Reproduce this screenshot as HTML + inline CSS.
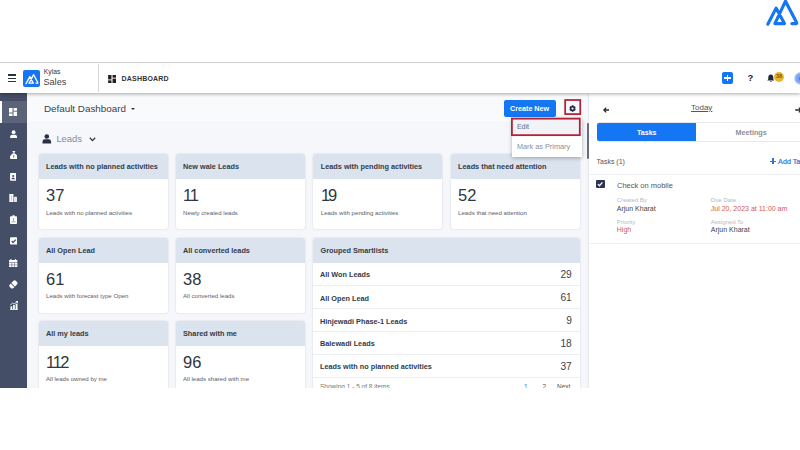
<!DOCTYPE html>
<html>
<head>
<meta charset="utf-8">
<title>Kylas Sales Dashboard</title>
<style>
*{box-sizing:border-box;margin:0;padding:0}
html,body{width:800px;height:450px;overflow:hidden;background:#fff;font-family:"Liberation Sans",sans-serif;color:#3a4250}
.abs{position:absolute}
#stage{position:relative;width:800px;height:450px;overflow:hidden;background:#fff}
#app{position:absolute;left:0;top:62px;width:800px;height:326px;overflow:hidden;background:#f6f7fb;border-top:1px solid #cdcdcd}
#hdr{position:absolute;left:0;top:0;width:800px;height:30.2px;background:#fff;box-shadow:0 1px 3.5px rgba(0,0,0,.34);z-index:5}
#side{position:absolute;left:0;top:30px;width:27.3px;height:296px;background:#454e67}
#side .act{position:absolute;left:0;top:7.7px;width:27.3px;height:22px;background:#5b637a}
#side .act:before{content:"";position:absolute;left:0;top:0;width:1.6px;height:22px;background:#fff}
#side svg{position:absolute}
.t{position:absolute;white-space:nowrap;line-height:1}
.card{position:absolute;background:#fff;border-radius:3px;box-shadow:0 0 2px rgba(120,135,160,.35);overflow:hidden}
.card .h{position:absolute;left:0;top:0;right:0;height:25.2px;background:#dae3ee}
.card .ti{position:absolute;left:7.5px;top:9.1px;font-size:7.3px;font-weight:bold;color:#333b48;white-space:nowrap;line-height:1}
.card .n{position:absolute;left:7.8px;top:34.5px;font-size:16px;transform:scaleX(1.03);transform-origin:0 0;color:#2f3642;white-space:nowrap;line-height:1}
.card .s{position:absolute;left:7.5px;top:55.8px;font-size:6.1px;color:#59606c;white-space:nowrap;line-height:1}
#right{position:absolute;left:588.5px;top:30px;width:212px;height:296px;background:#fff;box-shadow:-1px 0 2px rgba(60,70,100,.10)}
.row{position:absolute;left:0;right:0;height:23px;border-top:1px solid #ebeef2}
.row .l{position:absolute;left:7px;top:8.6px;font-size:7.3px;font-weight:bold;color:#333b48;white-space:nowrap;line-height:1}
.row .r{position:absolute;right:8px;top:7.2px;font-size:10.2px;color:#3a3f4b;white-space:nowrap;line-height:1}
</style>
</head>
<body>
<div id="stage">
  <!-- top-right brand mark -->
  <svg class="abs" style="left:750px;top:0px" width="50" height="35" viewBox="0 0 50 35">
    <path d="M17.8 24.2 L26.1 8.1 L34.4 23.6 L24.9 23.6 L35.5 1.2 L46.6 22.4 Q47.1 23.6 45.8 23.6 L41.9 23.6" fill="none" stroke="#1476f2" stroke-width="3.15" stroke-linejoin="round" stroke-linecap="round"/>
  </svg>

  <div id="app">
    <div id="hdr">
      <!-- hamburger -->
      <div class="abs" style="left:8.2px;top:11.4px;width:7.9px;height:1.4px;background:#2c3245"></div>
      <div class="abs" style="left:8.2px;top:14.5px;width:7.9px;height:1.4px;background:#2c3245"></div>
      <div class="abs" style="left:8.2px;top:17.6px;width:7.9px;height:1.4px;background:#2c3245"></div>
      <!-- logo -->
      <div class="abs" style="left:22.8px;top:7px;width:17.1px;height:16.9px;background:#1476f2;border-radius:2px"></div>
      <svg class="abs" style="left:22.7px;top:7.8px" width="17.2" height="17" viewBox="0 0 17.2 17">
        <path d="M3 12.6 L6.9 5.6 L10.3 12.2 L6 12.2 L10.6 3.6 L14.9 11.8 Q15.1 12.2 14.5 12.2 L13 12.2" fill="none" stroke="#fff" stroke-width="1.3" stroke-linejoin="round" stroke-linecap="round"/>
      </svg>
      <div class="t" style="left:43.8px;top:5.6px;font-size:6.8px;color:#333">Kylas</div>
      <div class="t" style="left:43.5px;top:14.8px;font-size:9.1px;color:#444">Sales</div>
      <div class="abs" style="left:98px;top:1px;width:1px;height:28px;background:#d4d6db"></div>
      <!-- dashboard icon -->
      <svg class="abs" style="left:107.5px;top:11.5px" width="8.2" height="8" viewBox="0 0 9 9">
        <rect x="0" y="0" width="3.8" height="5" fill="#222"/><rect x="0" y="6" width="3.8" height="3" fill="#222"/>
        <rect x="5" y="0" width="4" height="3" fill="#222"/><rect x="5" y="4" width="4" height="5" fill="#222"/>
      </svg>
      <div class="t" style="left:121.5px;top:12px;font-size:7px;font-weight:bold;color:#333;letter-spacing:.2px">DASHBOARD</div>
      <!-- right icons -->
      <div class="abs" style="left:721.8px;top:9.3px;width:11.4px;height:11.6px;background:#1476f2;border-radius:2px"></div>
      <div class="abs" style="left:724.2px;top:14.3px;width:6.6px;height:1.7px;background:#fff"></div>
      <div class="abs" style="left:726.65px;top:11.8px;width:1.7px;height:6.6px;background:#fff"></div>
      <div class="t" style="left:747.4px;top:10.1px;font-size:9.5px;font-weight:bold;color:#222">?</div>
      <svg class="abs" style="left:766.5px;top:11.2px" width="7.6" height="9" viewBox="0 0 9 10"><path d="M4.5 0.3 C2.3 0.3 1.5 2 1.5 4 L1.5 5.8 L0.3 7.5 L8.7 7.5 L7.5 5.8 L7.5 4 C7.5 2 6.7 0.3 4.5 0.3 Z M3.2 8.2 A1.35 1.35 0 0 0 5.8 8.2 Z" fill="#23283a"/></svg>
      <div class="abs" style="left:774px;top:9px;width:9.7px;height:9.7px;border-radius:5px;background:#e9b531"></div>
      <div class="t" style="left:775.9px;top:11.2px;font-size:5.4px;font-weight:bold;color:#8a5a00">38</div>
      <svg class="abs" style="left:793px;top:8px" width="8" height="15" viewBox="0 0 8 15"><circle cx="7.6" cy="7.4" r="6.3" fill="#a9c3f6"/><circle cx="7.6" cy="7.4" r="5.2" fill="#a7a6ee"/><circle cx="7.6" cy="7.4" r="4.5" fill="#6fa9f1"/><circle cx="8.4" cy="7.6" r="2.2" fill="#2f6fd0"/></svg>
    </div>

    <div id="side">
      <div class="act"></div>
      <!-- 1 dashboard : centre y (page)112 => side-local 112-93=19 -->
      <svg style="left:9.2px;top:14.8px" width="8.2" height="8.2" viewBox="0 0 9 9"><rect x="0" y="0" width="3.9" height="5" fill="#fff"/><rect x="0" y="6" width="3.9" height="3" fill="#fff"/><rect x="5" y="0" width="4" height="3" fill="#fff"/><rect x="5" y="4" width="4" height="5" fill="#fff"/></svg>
      <!-- 2 user -->
      <svg style="left:10px;top:36.7px" width="7.2" height="8.2" viewBox="0 0 10 11"><circle cx="5" cy="2.8" r="2.7" fill="#fff"/><path d="M0.2 11 L0.2 9.2 Q0.2 6.3 3 6.3 L7 6.3 Q9.8 6.3 9.8 9.2 L9.8 11 Z" fill="#fff"/></svg>
      <!-- 3 money bag -->
      <svg style="left:9.8px;top:58px" width="7.6" height="8.4" viewBox="0 0 10 11"><path d="M3 0 L7 0 L6 2.3 L4 2.3 Z M4 3 L6 3 C8.5 4.5 10 6.5 10 8.6 Q10 11 7.5 11 L2.5 11 Q0 11 0 8.6 C0 6.5 1.5 4.5 4 3 Z" fill="#fff"/><rect x="4.5" y="5.3" width="1" height="3.6" fill="#454e67"/></svg>
      <!-- 4 id badge -->
      <svg style="left:10.1px;top:79.9px" width="6.4" height="7.8" viewBox="0 0 8 10"><rect x="0" y="0" width="8" height="10" rx="1" fill="#fff"/><circle cx="4" cy="3.8" r="1.35" fill="#454e67"/><path d="M1.7 8 Q1.7 5.8 4 5.8 Q6.3 5.8 6.3 8 Z" fill="#454e67"/></svg>
      <!-- 5 building -->
      <svg style="left:9.2px;top:101px" width="8.2" height="8.2" viewBox="0 0 10 10"><rect x="0.4" y="0" width="5" height="10" rx=".5" fill="#fff"/><rect x="6" y="3.4" width="3.8" height="6.6" rx=".5" fill="#fff" opacity=".85"/><rect x="2.6" y="1.5" width=".7" height="7" fill="#454e67" opacity=".5"/></svg>
      <!-- 6 clipboard -->
      <svg style="left:10px;top:122px" width="7" height="9" viewBox="0 0 8 10"><rect x="0" y="1.2" width="8" height="8.8" rx="1" fill="#fff"/><rect x="2.6" y="0" width="2.8" height="2.2" rx=".8" fill="#fff"/><rect x="3.6" y="3.4" width=".9" height="3" fill="#454e67" opacity=".7"/><rect x="1.6" y="7.2" width="4.8" height="1" fill="#454e67" opacity=".6"/></svg>
      <!-- 7 check square -->
      <svg style="left:10px;top:144.3px" width="7.4" height="7.8" viewBox="0 0 10 10"><rect x="0" y="0" width="10" height="10" rx="1.5" fill="#fff"/><path d="M2.2 5.2 L4.2 7.2 L7.9 3.2" fill="none" stroke="#454e67" stroke-width="1.7"/></svg>
      <!-- 8 calendar -->
      <svg style="left:9.2px;top:165.5px" width="8.4" height="8.6" viewBox="0 0 10 10"><rect x="1.6" y="0" width="1.4" height="2" fill="#fff"/><rect x="7" y="0" width="1.4" height="2" fill="#fff"/><rect x="0" y="1" width="10" height="2.4" rx=".6" fill="#fff"/><rect x="0" y="4" width="10" height="6" rx=".6" fill="#fff"/><path d="M3.4 4 V10 M6.6 4 V10 M0 6.9 H10" stroke="#454e67" stroke-width=".8" opacity=".75"/></svg>
      <!-- 9 tilted pill -->
      <svg style="left:9px;top:186.6px" width="8.8" height="9" viewBox="0 0 10 10"><g transform="rotate(-45 5 5)"><rect x="0" y="2" width="10" height="6" rx="2.6" fill="#fff"/><rect x="3.4" y="2" width="1.3" height="6" fill="#454e67" opacity=".75"/></g></svg>
      <!-- 10 chart -->
      <svg style="left:9.6px;top:208px" width="8" height="9" viewBox="0 0 10 11"><rect x="0" y="10" width="10" height="1" fill="#fff"/><rect x="0.6" y="6.5" width="2.2" height="3.5" fill="#fff"/><rect x="3.8" y="5" width="2.2" height="5" fill="#fff"/><rect x="7" y="3.2" width="2.4" height="6.8" fill="#fff"/><path d="M0.3 4.8 L3.4 2.4 L5 3.8 L9 0.6" fill="none" stroke="#fff" stroke-width="1"/><path d="M6.8 0 L10 0 L10 3 Z" fill="#fff"/></svg>
    </div>

    <!-- main -->
    <div class="abs" style="left:27.3px;top:30px;width:561.2px;height:27.6px;background:#f9fafc;border-bottom:1px solid #fbfcfe"></div>
    <div class="t" style="left:43.9px;top:40.6px;font-size:9.85px;color:#3a4250">Default Dashboard</div>
    <div class="abs" style="left:130.6px;top:45.1px;width:0;height:0;border-left:2.3px solid transparent;border-right:2.3px solid transparent;border-top:2.6px solid #333"></div>

    <!-- create new -->
    <div class="abs" style="left:504.3px;top:36.8px;width:51.4px;height:16.9px;background:#1476f2;border-radius:2px"></div>
    <div class="t" style="left:510px;top:42px;font-size:7.2px;font-weight:bold;color:#fff">Create New</div>
    <svg class="abs" style="left:564px;top:36px" width="18" height="17" viewBox="0 0 18 17"><rect x="1.15" y="1.0" width="15.1" height="14.1" fill="#f6f7fa" stroke="#b51f38" stroke-width="1.75"/></svg>
    <!-- gear -->
    <svg class="abs" style="left:569.25px;top:41.6px" width="7.1" height="7.1" viewBox="0 0 10 10">
      <g fill="#262b40"><circle cx="5" cy="5" r="3.7"/>
      <rect x="3.6" y="0.5" width="2.8" height="9" rx=".7"/>
      <rect x="3.6" y="0.5" width="2.8" height="9" rx=".7" transform="rotate(60 5 5)"/>
      <rect x="3.6" y="0.5" width="2.8" height="9" rx=".7" transform="rotate(120 5 5)"/></g>
      <circle cx="5" cy="5" r="1.55" fill="#f6f7fa"/>
    </svg>

    <!-- Leads heading -->
    <svg class="abs" style="left:42px;top:71px" width="9.6" height="9.6" viewBox="0 0 10 10"><circle cx="5" cy="2.6" r="2.4" fill="#2b3140"/><path d="M0.5 10 L0.5 8 Q0.5 5.6 3 5.6 L7 5.6 Q9.5 5.6 9.5 8 L9.5 10 Z" fill="#2b3140"/></svg>
    <div class="t" style="left:56.4px;top:71.1px;font-size:9.4px;color:#858b96">Leads</div>
    <svg class="abs" style="left:88.8px;top:74px" width="7" height="5" viewBox="0 0 7 5"><path d="M0.8 0.8 L3.5 3.6 L6.2 0.8" fill="none" stroke="#333" stroke-width="1.3"/></svg>

    <!-- row 1 cards -->
    <div class="card" style="left:38.5px;top:90.8px;width:129px;height:75.1px"><div class="h"></div><div class="ti">Leads with no planned activities</div><div class="n">37</div><div class="s">Leads with no planned activities</div></div>
    <div class="card" style="left:175.5px;top:90.8px;width:129px;height:75.1px"><div class="h"></div><div class="ti">New wale Leads</div><div class="n" style="left:7.3px"><span style="letter-spacing:-2.3px">1</span>1</div><div class="s">Newly created leads</div></div>
    <div class="card" style="left:313.3px;top:90.8px;width:129px;height:75.1px"><div class="h"></div><div class="ti">Leads with pending activities</div><div class="n" style="left:7.4px"><span style="letter-spacing:-2px">1</span>9</div><div class="s">Leads with pending activities</div></div>
    <div class="card" style="left:450.6px;top:90.8px;width:129px;height:75.1px"><div class="h"></div><div class="ti">Leads that need attention</div><div class="n">52</div><div class="s">Leads that need attention</div></div>
    <!-- row 2 cards -->
    <div class="card" style="left:38.5px;top:174.5px;width:129px;height:75.1px"><div class="h"></div><div class="ti">All Open Lead</div><div class="n">61</div><div class="s">Leads with forecast type Open</div></div>
    <div class="card" style="left:175.5px;top:174.5px;width:129px;height:75.1px"><div class="h"></div><div class="ti">All converted leads</div><div class="n">38</div><div class="s">All converted leads</div></div>
    <!-- row 3 cards -->
    <div class="card" style="left:38.5px;top:257.7px;width:129px;height:75.1px"><div class="h"></div><div class="ti">All my leads</div><div class="n" style="left:7.3px"><span style="letter-spacing:-2.3px">1</span><span style="letter-spacing:-1.6px">1</span>2</div><div class="s">All leads owned by me</div></div>
    <div class="card" style="left:175.5px;top:257.7px;width:129px;height:75.1px"><div class="h"></div><div class="ti">Shared with me</div><div class="n">96</div><div class="s">All leads shared with me</div></div>
    <!-- grouped smartlists -->
    <div class="card" style="left:313px;top:174.5px;width:266.8px;height:160px"><div class="h"></div><div class="ti">Grouped Smartlists</div>
      <div class="row" style="top:25px;border-top:none"><div class="l">All Won Leads</div><div class="r">29</div></div>
      <div class="row" style="top:47.6px"><div class="l">All Open Lead</div><div class="r">61</div></div>
      <div class="row" style="top:70.5px"><div class="l">Hinjewadi Phase-1 Leads</div><div class="r">9</div></div>
      <div class="row" style="top:93.4px"><div class="l">Balewadi Leads</div><div class="r">18</div></div>
      <div class="row" style="top:116.3px"><div class="l">Leads with no planned activities</div><div class="r">37</div></div>
      <div class="row" style="top:139.7px">
        <div class="l" style="font-weight:normal;font-size:6.5px;color:#777;top:5.9px">Showing 1 - 5 of 8 items</div>
        <div class="t" style="left:211px;top:5.9px;font-size:6.5px;color:#1476f2">1</div>
        <div class="t" style="left:229.5px;top:5.9px;font-size:6.5px;color:#555">2</div>
        <div class="t" style="left:244px;top:5.9px;font-size:6.5px;color:#555">Next</div>
      </div>
    </div>

    <!-- dropdown -->
    <div class="abs" style="left:511.5px;top:54.8px;width:70px;height:39.6px;background:#fff;box-shadow:0 1px 4px rgba(0,0,0,.3);z-index:6"></div>
    <svg class="abs" style="left:510px;top:54px;z-index:7" width="72" height="20" viewBox="0 0 72 20"><rect x="1.9" y="1.65" width="67.9" height="16.5" fill="#f1f3f6" stroke="#b51f38" stroke-width="1.8"/></svg>
    <div class="t" style="left:516.9px;top:60.3px;font-size:7px;color:#666d78;z-index:8">Edit</div>
    <div class="t" style="left:516.9px;top:79.8px;font-size:7.34px;color:#8a8f98;z-index:8">Mark as Primary</div>

    <!-- scrollbar -->
    <div class="abs" style="left:586.9px;top:60.1px;width:2.1px;height:35.5px;background:#686d77;border-radius:1px;z-index:4"></div>

    <div id="right">
      <svg class="abs" style="left:14.3px;top:13.7px" width="6.4" height="6" viewBox="0 0 6.4 6"><path d="M6.2 3 H1 M3.2 0.6 L0.8 3 L3.2 5.4" fill="none" stroke="#2a2a2a" stroke-width="1.3"/></svg>
      <div class="t" style="left:102.5px;top:10.5px;font-size:8px;color:#555;text-decoration:underline">Today</div>
      <svg class="abs" style="left:206px;top:13.7px" width="7" height="6" viewBox="0 0 7 6"><path d="M0.2 3 H6 M3.8 0.6 L6.2 3 L3.8 5.4" fill="none" stroke="#2a2a2a" stroke-width="1.3"/></svg>
      <div class="abs" style="left:8px;top:28.8px;width:212px;height:20px;border:1px solid #e6e9ee;border-radius:2px;background:#fff"></div>
      <div class="abs" style="left:8.2px;top:30px;width:99.2px;height:17.8px;background:#1476f2;border-radius:2px 0 0 2px"></div>
      <div class="t" style="left:48.6px;top:35.5px;font-size:7px;font-weight:bold;color:#fff">Tasks</div>
      <div class="t" style="left:146.9px;top:36.1px;font-size:7.25px;font-weight:bold;color:#8a909b">Meetings</div>
      <div class="t" style="left:8px;top:64.9px;font-size:7px;color:#555">Tasks (1)</div>
      <div class="abs" style="left:181.6px;top:67.65px;width:6px;height:1.5px;background:#2b78d8"></div><div class="abs" style="left:183.85px;top:65.4px;width:1.5px;height:6px;background:#2b78d8"></div>
      <div class="t" style="left:189.6px;top:64.9px;font-size:7.2px;color:#2b78d8;-webkit-text-stroke:.2px #2b78d8">Add Task</div>
      <div class="abs" style="left:0;top:80.7px;width:212px;height:1px;background:#eef0f4"></div>
      <div class="abs" style="left:7.9px;top:87.2px;width:8.2px;height:8px;background:#2b3552;border-radius:1px"></div>
      <svg class="abs" style="left:7.9px;top:87.2px" width="8.2" height="8" viewBox="0 0 8 8"><path d="M1.8 4.1 L3.4 5.7 L6.3 2.4" fill="none" stroke="#fff" stroke-width="1.3"/></svg>
      <div class="t" style="left:28.5px;top:88.5px;font-size:7.5px;color:#555">Check on mobile</div>
      <div class="t" style="left:28.3px;top:104.3px;font-size:6px;color:#b4bac4">Created By</div>
      <div class="t" style="left:28.3px;top:111.7px;font-size:7px;color:#444">Arjun Kharat</div>
      <div class="t" style="left:122.3px;top:104.3px;font-size:6px;color:#b4bac4">Due Date</div>
      <div class="t" style="left:122.3px;top:111.7px;font-size:7px;color:#d25a50">Jul 20, 2023 at 11:00 am</div>
      <div class="t" style="left:28.3px;top:125.6px;font-size:6px;color:#b4bac4">Priority</div>
      <div class="t" style="left:28.3px;top:133px;font-size:7px;color:#d25a50">High</div>
      <div class="t" style="left:122.3px;top:125.6px;font-size:6px;color:#b4bac4">Assigned To</div>
      <div class="t" style="left:122.3px;top:133px;font-size:7px;color:#444">Arjun Kharat</div>
      <div class="abs" style="left:0;top:150.3px;width:212px;height:1px;background:#eef0f4"></div>
    </div>
  </div>
</div>
</body>
</html>
